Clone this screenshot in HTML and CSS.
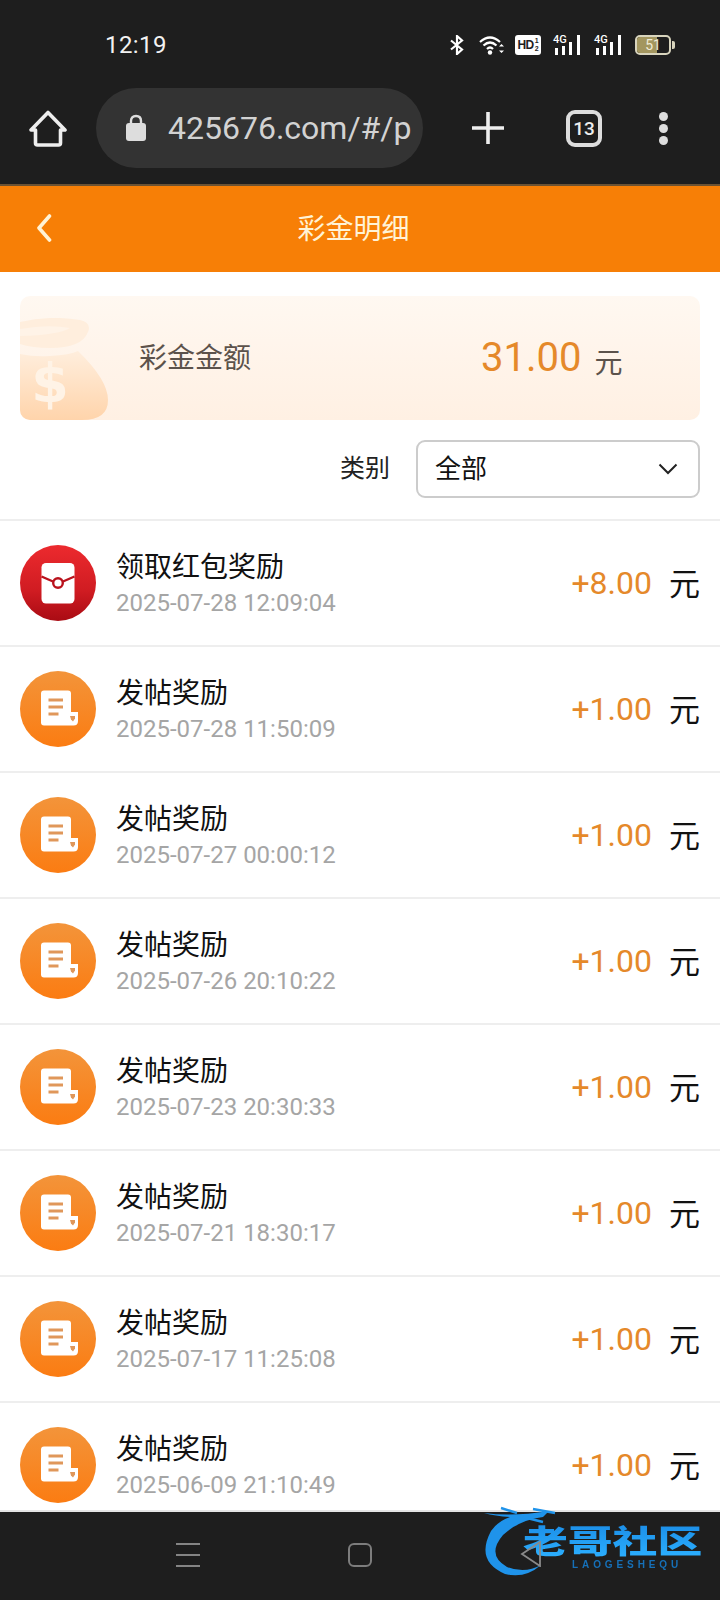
FILE: index.html
```html
<!DOCTYPE html>
<html lang="zh-CN">
<head>
<meta charset="utf-8">
<title>彩金明细</title>
<link rel="stylesheet" href="styles.css">
</head>
<body>
<svg class="defs" width="0" height="0" aria-hidden="true">
  <defs>
    <linearGradient id="g-red" x1="0" y1="0" x2="0" y2="1"><stop offset="0" stop-color="#ec2a2e"/><stop offset=".6" stop-color="#d01c22"/><stop offset="1" stop-color="#a90b13"/></linearGradient>
    <linearGradient id="g-org" x1="0" y1="0" x2="0" y2="1"><stop offset="0" stop-color="#f3943a"/><stop offset="1" stop-color="#fb7c12"/></linearGradient>
    <linearGradient id="g-bag" x1="0" y1="0" x2="0" y2="1"><stop offset="0" stop-color="#ffeedd"/><stop offset="1" stop-color="#ffd4ab"/></linearGradient>
    <symbol id="i-red" viewBox="0 0 76 76">
      <circle cx="38" cy="38" r="38" fill="url(#g-red)"/>
      <rect x="21.500" y="18" width="33" height="40.500" rx="4.500" fill="#fff"/>
      <path d="M21.500 31.500 L33 36.500 M43 36.500 L54.500 31.500" stroke="#b9121c" stroke-width="2.400" fill="none"/>
      <circle cx="38" cy="38" r="4.800" fill="#fff" stroke="#b9121c" stroke-width="2.400"/>
    </symbol>
    <symbol id="i-doc" viewBox="0 0 76 76">
      <circle cx="38" cy="38" r="38" fill="url(#g-org)"/>
      <path d="M24 19.500 H48 Q51 19.500 51 22.500 V41 H58 V50 Q58 54.500 53.500 54.500 H24 Q21 54.500 21 51.500 V22.500 Q21 19.500 24 19.500 Z" fill="#fff"/>
      <path d="M28.500 29 H43 M28.500 36 H43 M28.500 43 H38.500" stroke="#e0975a" stroke-width="2.800" fill="none"/>
      <path d="M50 45 H55 V47.500 L53 50.500 L51 48.500 Z" fill="#e0975a"/>
    </symbol>
  </defs>
</svg>
<div class="app">
  <header class="chrome">
    <div class="status">
      <span class="time">12:19</span>
      <div class="status-icons">
        <svg class="ic-bt" viewBox="0 0 16 20"><path d="M2 5.500 L13 14.500 L8 19 V1 L13 5.500 L2 14.500" fill="none" stroke="#fff" stroke-width="2.200"/></svg>
        <svg class="ic-wifi" viewBox="0 0 26 20"><path d="M1 7 Q11 -2 21 7 M4.500 10.500 Q11 4.500 17.500 10.500 M8 14 Q11 11 14 14" fill="none" stroke="#fff" stroke-width="2.200"/><circle cx="11" cy="17.500" r="2.200" fill="#fff"/><path d="M20 11.500 L22.500 9 L25 11.500 Z M20 15.500 H25 L22.500 18 Z" fill="#fff"/></svg>
        <span class="hd"><b>HD</b><i>1<br>2</i></span>
        <span class="sig"><em>4G</em><svg viewBox="0 0 30 20"><path d="M2 13 H5 V20 H2 Z M9 11 H12 V20 H9 Z M16 7 H19 V20 H16 Z M24 0 H27 V20 H24 Z" fill="#fff"/></svg></span>
        <span class="sig"><em>4G</em><svg viewBox="0 0 30 20"><path d="M2 13 H5 V20 H2 Z M9 11 H12 V20 H9 Z M16 7 H19 V20 H16 Z M24 0 H27 V20 H24 Z" fill="#fff"/></svg></span>
        <span class="batt"><span class="batt-body"><span class="batt-fill"></span><span class="batt-num">51</span></span><span class="batt-cap"></span></span>
      </div>
    </div>
    <div class="toolbar">
      <svg class="ic-home" viewBox="0 0 38 37"><path d="M19 2.500 L36 20 H31.500 V33 Q31.500 35 29.500 35 H8.500 Q6.500 35 6.500 33 V20 H2 Z" fill="none" stroke="#eee" stroke-width="3.600" stroke-linejoin="round"/></svg>
      <div class="url">
        <svg class="ic-lock" viewBox="0 0 22 27"><path d="M6 11 V7 Q6 2 11 2 Q16 2 16 7 V11" fill="none" stroke="#ddd" stroke-width="2.400"/><rect x="1" y="9" width="20" height="18" rx="3" fill="#ddd"/></svg>
        <span class="url-text">425676.com/#/p</span>
      </div>
      <svg class="ic-plus" viewBox="0 0 32 32"><path d="M16 0 V32 M0 16 H32" stroke="#eee" stroke-width="3.600"/></svg>
      <span class="tabs">13</span>
      <span class="dots"><i></i><i></i><i></i></span>
    </div>
  </header>

  <div class="titlebar">
    <svg class="ic-back" viewBox="0 0 16 28"><path d="M13.500 2 L3 14 L13.500 26" fill="none" stroke="#fff3d6" stroke-width="3.600" stroke-linecap="round" stroke-linejoin="round"/></svg>
    <h1 class="title">彩金明细</h1>
  </div>

  <main class="content">
    <section class="card">
      <svg class="bag" viewBox="0 0 88 102">
        <path d="M0 4 Q30 -3 60 2 Q72 5 68 14 Q62 30 30 30 Q12 30 0 26 Z" fill="#ffeedd"/>
        <path d="M0 11 Q28 6 50 10 Q38 17 0 18 Z" fill="#fff3e7"/>
        <path d="M0 36 Q14 39 30 38 Q50 37 58 33 Q88 62 88 82 Q88 102 62 102 H8 Q0 102 0 94 Z" fill="url(#g-bag)"/>
        <text class="bag-sign" x="30" y="84">$</text>
      </svg>
      <span class="card-label">彩金金额</span>
      <span class="card-amount">31.00</span>
      <span class="card-unit">元</span>
    </section>

    <div class="filter">
      <span class="filter-label">类别</span>
      <div class="select">
        <span class="select-value">全部</span>
        <svg class="ic-chev" viewBox="0 0 20 12"><path d="M1.500 1.500 L10 10 L18.500 1.500" fill="none" stroke="#222" stroke-width="2"/></svg>
      </div>
    </div>

    <ul class="list">
      <li class="row"><svg class="row-icon"><use href="#i-red"/></svg><div class="row-text"><span class="row-title">领取红包奖励</span><span class="row-date">2025-07-28 12:09:04</span></div><span class="row-amount">+8.00</span><span class="row-unit">元</span></li>
      <li class="row"><svg class="row-icon"><use href="#i-doc"/></svg><div class="row-text"><span class="row-title">发帖奖励</span><span class="row-date">2025-07-28 11:50:09</span></div><span class="row-amount">+1.00</span><span class="row-unit">元</span></li>
      <li class="row"><svg class="row-icon"><use href="#i-doc"/></svg><div class="row-text"><span class="row-title">发帖奖励</span><span class="row-date">2025-07-27 00:00:12</span></div><span class="row-amount">+1.00</span><span class="row-unit">元</span></li>
      <li class="row"><svg class="row-icon"><use href="#i-doc"/></svg><div class="row-text"><span class="row-title">发帖奖励</span><span class="row-date">2025-07-26 20:10:22</span></div><span class="row-amount">+1.00</span><span class="row-unit">元</span></li>
      <li class="row"><svg class="row-icon"><use href="#i-doc"/></svg><div class="row-text"><span class="row-title">发帖奖励</span><span class="row-date">2025-07-23 20:30:33</span></div><span class="row-amount">+1.00</span><span class="row-unit">元</span></li>
      <li class="row"><svg class="row-icon"><use href="#i-doc"/></svg><div class="row-text"><span class="row-title">发帖奖励</span><span class="row-date">2025-07-21 18:30:17</span></div><span class="row-amount">+1.00</span><span class="row-unit">元</span></li>
      <li class="row"><svg class="row-icon"><use href="#i-doc"/></svg><div class="row-text"><span class="row-title">发帖奖励</span><span class="row-date">2025-07-17 11:25:08</span></div><span class="row-amount">+1.00</span><span class="row-unit">元</span></li>
      <li class="row"><svg class="row-icon"><use href="#i-doc"/></svg><div class="row-text"><span class="row-title">发帖奖励</span><span class="row-date">2025-06-09 21:10:49</span></div><span class="row-amount">+1.00</span><span class="row-unit">元</span></li>
    </ul>
  </main>

  <nav class="navbar">
    <span class="nav-menu"><i></i><i></i><i></i></span>
    <span class="nav-home"></span>
  </nav>

  <div class="watermark">
    <svg class="wm-swoosh" viewBox="0 0 130 72"><path d="M1 8 Q30 12 66 6 L60 12 Q36 15 20 30 Q3 50 24 62 Q42 69 58 60 Q42 74 22 69 Q-8 56 8 26 Q15 16 27 12 Q12 11 1 8 Z" fill="#1f93ea"/><path d="M18 3 L34 8 M50 4 L72 8 M40 12 L60 17" stroke="#1f93ea" stroke-width="2.500" fill="none"/></svg>
    <span class="wm-name">老哥社区</span>
    <span class="wm-latin">LAOGESHEQU</span>
  </div>
  <svg class="nav-back" viewBox="0 0 22 26"><path d="M20 1 L2 13 L20 25 Z" fill="none" stroke="#8a8a8a" stroke-width="1.800"/></svg>
</div>
</body>
</html>
```

FILE: styles.css
```css
* { box-sizing: border-box; }
html, body { margin: 0; padding: 0; background: #fff; }
body { font-family: Roboto, "Noto Sans CJK SC", sans-serif; }
.defs { position: absolute; }
.app { position: relative; width: 720px; height: 1600px; display: flex; flex-direction: column; overflow: hidden; }

.chrome { background: #1e1e1e; height: 186px; flex: none; border-bottom: 2px solid #6b5233; }
.status { height: 88px; display: flex; align-items: center; justify-content: space-between; padding: 2px 45px 0 105px; }
.time { color: #f2f2f2; font-size: 24px; letter-spacing: .4px; font-weight: 400; }
.status-icons { display: flex; align-items: center; }
.ic-bt { width: 16px; height: 20px; margin-right: 14px; }
.ic-wifi { width: 26px; height: 20px; margin-right: 10px; }
.hd { width: 26px; height: 20px; background: #fff; border-radius: 3px; color: #1e1e1e; display: flex; align-items: center; justify-content: center; margin-right: 12px; font-family: "Liberation Sans", sans-serif; }
.hd b { font-size: 12px; letter-spacing: -.5px; }
.hd i { font-size: 7px; line-height: 8px; font-style: normal; font-weight: 700; margin-left: 1px; }
.sig { position: relative; width: 30px; height: 20px; margin-right: 11px; }
.sig svg { width: 30px; height: 20px; display: block; }
.sig em { position: absolute; left: 0; top: -1px; color: #fff; font-style: normal; font-size: 11px; line-height: 12px; font-weight: 500; }
.batt { display: flex; align-items: center; }
.batt-body { position: relative; width: 36px; height: 20px; border: 2px solid #d8d4bd; border-radius: 5px; overflow: hidden; display: block; }
.batt-fill { position: absolute; left: 0; top: 0; bottom: 0; width: 20px; background: #a3965f; }
.batt-num { position: absolute; inset: 0; text-align: center; color: #f0ecd8; font-size: 14px; line-height: 16px; }
.batt-cap { width: 3px; height: 8px; margin-left: 1px; background: #d8d4bd; border-radius: 0 2px 2px 0; }

.toolbar { height: 96px; display: flex; align-items: flex-start; padding-left: 29px; position: relative; }
.ic-home { width: 38px; height: 37px; margin: 22px 29px 0 0; flex: none; }
.url { width: 327px; height: 80px; border-radius: 40px; background: #333; display: flex; align-items: center; padding-left: 29px; flex: none; margin-right: 49px; }
.ic-lock { width: 22px; height: 27px; flex: none; margin-right: 21px; margin-top: -1px; }
.url-text { white-space: nowrap; color: #d2d2d2; font-size: 32px; letter-spacing: 0; }
.ic-plus { width: 32px; height: 32px; margin: 24px 62px 0 0; flex: none; }
.tabs { width: 36px; height: 37px; margin: 22px 57px 0 0; flex: none; border: 4px solid #ddd; border-radius: 9px; color: #eee; font-size: 19px; font-weight: 500; display: flex; align-items: center; justify-content: center; }
.dots { display: flex; flex-direction: column; gap: 3px; margin-top: 24px; }
.dots i { width: 9px; height: 9px; border-radius: 50%; background: #ddd; display: block; }

.titlebar { position: relative; flex: none; height: 86px; background: #f77f06; display: flex; align-items: center; justify-content: center; }
.ic-back { position: absolute; left: 36px; top: 28px; width: 16px; height: 28px; }
.title { margin: 0 13px 5px 0; font-size: 28px; font-weight: 400; color: #fff3d6; }

.content { flex: 1; min-height: 0; overflow: hidden; padding-top: 24px; }
.card { position: relative; margin: 0 20px; height: 124px; border-radius: 10px; background: linear-gradient(#fff8f1, #fff0e3); display: flex; align-items: center; overflow: hidden; padding-left: 119px; }
.bag { position: absolute; left: 0; top: 22px; width: 88px; height: 102px; }
.bag-sign { font-family: "DejaVu Sans", sans-serif; font-size: 54px; font-weight: 700; fill: #fff3e6; text-anchor: middle; }
.card-label { font-size: 28px; color: #5c524b; margin-bottom: 4px; }
.card-amount { font-size: 40px; color: #e5892a; margin-left: 230px; margin-bottom: 2px; }
.card-unit { font-size: 28px; color: #5c524b; margin-left: 13px; margin-top: 6px; }

.filter { display: flex; align-items: flex-start; justify-content: flex-end; padding: 20px 20px 0 0; height: 99px; }
.filter-label { font-size: 25px; line-height: 58px; color: #222; margin-right: 26px; }
.select { width: 284px; height: 58px; border: 2px solid #ccc; border-radius: 9px; display: flex; align-items: center; justify-content: space-between; padding: 0 20px 0 17px; font-size: 26px; color: #111; }
.select-value { margin-bottom: 6px; }
.ic-chev { width: 20px; height: 12px; }

.list { list-style: none; margin: 0; padding: 0; border-top: 2px solid #eee; }
.row { height: 126px; display: flex; align-items: center; padding: 0 20px; border-bottom: 2px solid #eee; }
.row-icon { width: 76px; height: 76px; flex: none; }
.row-text { flex: 1; display: flex; flex-direction: column; margin-left: 20px; }
.row-title { font-size: 28px; color: #111; line-height: 40px; }
.row-date { font-size: 24px; color: #a5a5a5; line-height: 30px; }
.row-amount { font-size: 32px; color: #e5892a; }
.row-unit { font-size: 31px; color: #111; margin-left: 17px; margin-bottom: 4px; }

.navbar { position: absolute; left: 0; right: 0; bottom: 0; height: 90px; background: #1e1e1e; border-top: 2px solid #e4e4e4; display: flex; align-items: center; padding-bottom: 3px; }
.nav-menu { display: flex; flex-direction: column; gap: 9px; margin-left: 176px; }
.nav-menu i { display: block; width: 24px; height: 2px; background: #858585; }
.nav-home { width: 24px; height: 24px; border: 2px solid #7d7d7d; border-radius: 6px; margin-left: 148px; }
.nav-back { position: absolute; left: 520px; top: 1541px; width: 22px; height: 26px; }

.watermark { position: absolute; left: 483px; top: 1505px; width: 225px; height: 72px; filter: blur(.5px); }
.wm-swoosh { position: absolute; left: 0; top: 0; width: 130px; height: 72px; }
.wm-name { position: absolute; left: 40px; top: 20px; font-size: 32px; line-height: 34px; font-weight: 900; white-space: nowrap; transform: scaleX(1.4); transform-origin: left center; background: linear-gradient(#1c8fe8, #2cb0ff); -webkit-background-clip: text; background-clip: text; color: transparent; }
.wm-latin { position: absolute; left: 89px; top: 54px; font-family: "Liberation Sans", sans-serif; font-size: 10px; line-height: 12px; font-weight: 700; letter-spacing: 3.900px; color: #1670b8; white-space: nowrap; }
```
